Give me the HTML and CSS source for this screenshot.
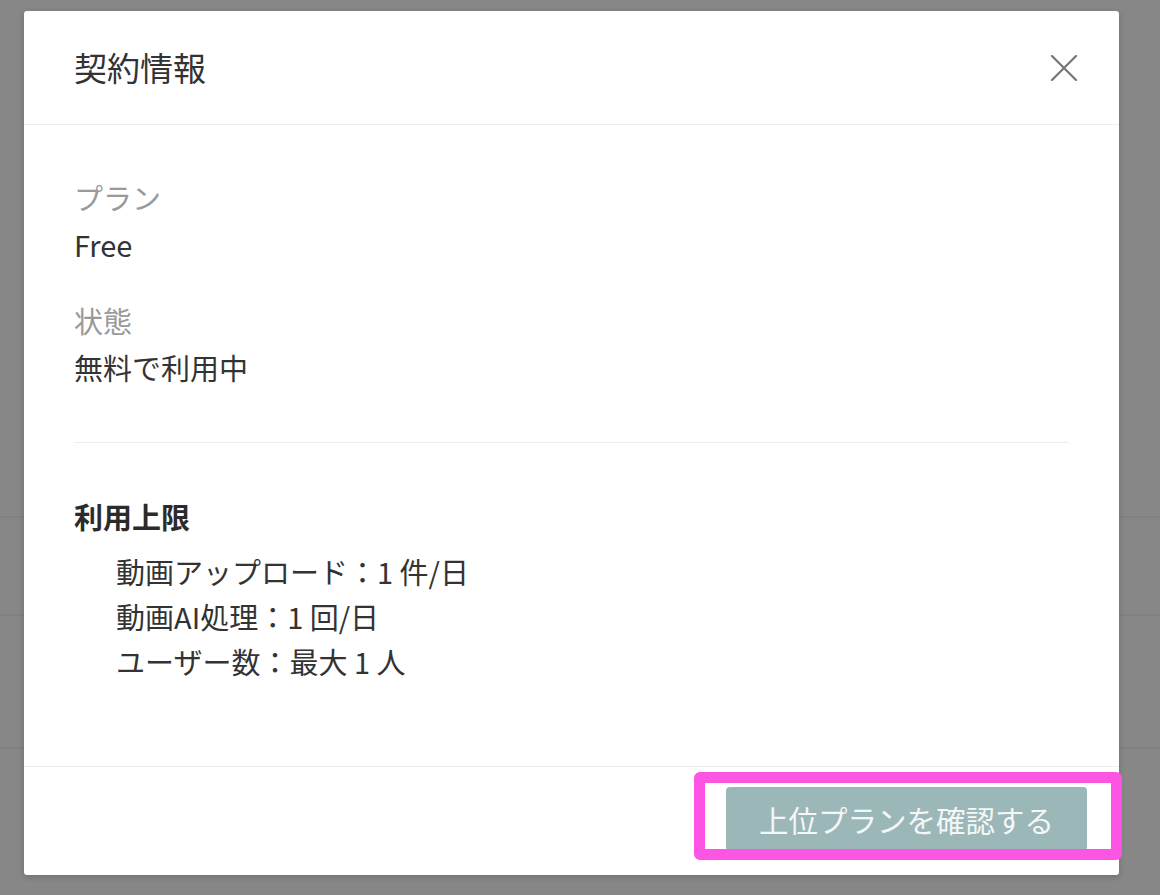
FILE: index.html
```html
<!DOCTYPE html>
<html lang="ja">
<head>
<meta charset="utf-8">
<title>契約情報</title>
<link rel="stylesheet" href="styles.css">
</head>
<body>
<div class="backdrop">
  <div class="modal">
    <div class="modal-header">
      <h2 class="modal-title">契約情報</h2>
      <button class="close-btn" aria-label="閉じる">
        <svg width="26" height="26" viewBox="0 0 26 26"><path d="M1 1 L25 25 M25 1 L1 25" stroke="#757575" stroke-width="2.2" stroke-linecap="round" fill="none"/></svg>
      </button>
    </div>
    <div class="modal-body">
      <div class="field">
        <div class="field-label">プラン</div>
        <div class="field-value">Free</div>
      </div>
      <div class="field">
        <div class="field-label">状態</div>
        <div class="field-value">無料で利用中</div>
      </div>
      <hr class="divider">
      <div class="limits">
        <div class="limits-title">利用上限</div>
        <ul class="limits-list">
          <li>動画アップロード：1 件/日</li>
          <li>動画AI処理：1 回/日</li>
          <li>ユーザー数：最大 1 人</li>
        </ul>
      </div>
    </div>
    <div class="modal-footer">
      <div class="btn-wrap">
        <button class="upgrade-btn">上位プランを確認する</button>
        <div class="highlight"></div>
      </div>
    </div>
  </div>
</div>
</body>
</html>
```

FILE: styles.css
```css
html, body {
  margin: 0;
  padding: 0;
}
body {
  width: 1160px;
  height: 895px;
  overflow: hidden;
  background-color: #878787;
  background-image:
    linear-gradient(#818181, #818181),
    linear-gradient(#818181, #818181),
    linear-gradient(#818181, #818181);
  background-size: 100% 2px, 100% 2px, 100% 2px;
  background-position: 0 516px, 0 614px, 0 747px;
  background-repeat: no-repeat;
  font-family: "Noto Sans CJK JP", "Noto Sans", sans-serif;
  color: #333;
}
.backdrop {
  padding: 11px 0 0 24px;
}
.modal {
  width: 1095px;
  height: 864px;
  background: #fff;
  border-radius: 3px;
  box-shadow: 0 2px 6px rgba(0,0,0,0.18);
  display: flex;
  flex-direction: column;
}
.modal-header {
  height: 114px;
  box-sizing: border-box;
  border-bottom: 1px solid #ececec;
  display: flex;
  align-items: center;
  justify-content: space-between;
  padding: 0 42px 0 50px;
}
.modal-title {
  margin: 0;
  font-size: 33px;
  font-weight: 400;
  color: #333;
  line-height: 1;
}
.close-btn {
  border: 0;
  background: none;
  padding: 0;
  width: 26px;
  height: 26px;
  display: flex;
}
.modal-body {
  flex: 1;
  padding: 49px 50px 0 50px;
  font-size: 29px;
}
.field + .field {
  margin-top: 29px;
}
.field-label {
  color: #9a9a9a;
  line-height: 47px;
}
.field-value {
  color: #333;
  line-height: 47px;
}
.divider {
  margin: 51px 0 0 0;
  border: 0;
  border-top: 1px solid #ececec;
  height: 0;
}
.limits {
  padding-top: 50px;
}
.limits-title {
  font-weight: 700;
  line-height: 46px;
  color: #2b2b2b;
}
.limits-list {
  list-style: none;
  margin: 10px 0 0 0;
  padding: 0 0 0 42px;
}
.limits-list li {
  line-height: 45px;
  color: #333;
}
.num {
  margin: 0 2px;
}
.modal-footer {
  border-top: 1px solid #ececec;
  height: 109px;
  box-sizing: border-box;
  display: flex;
  justify-content: flex-end;
  padding: 20px 32px 0 0;
}
.btn-wrap {
  position: relative;
  height: 64px;
}
.upgrade-btn {
  height: 64px;
  width: 361px;
  border: 0;
  border-radius: 4px;
  background: #9bb7b8;
  color: #f4f7f7;
  font-family: "Noto Sans CJK JP", "Noto Sans", sans-serif;
  font-size: 29.5px;
  padding: 0;
  line-height: 64px;
}
.highlight {
  position: absolute;
  top: -15px;
  left: -32px;
  right: -35px;
  bottom: -9px;
  border: 11px solid #fd55e3;
  border-radius: 6px;
  pointer-events: none;
}
```
